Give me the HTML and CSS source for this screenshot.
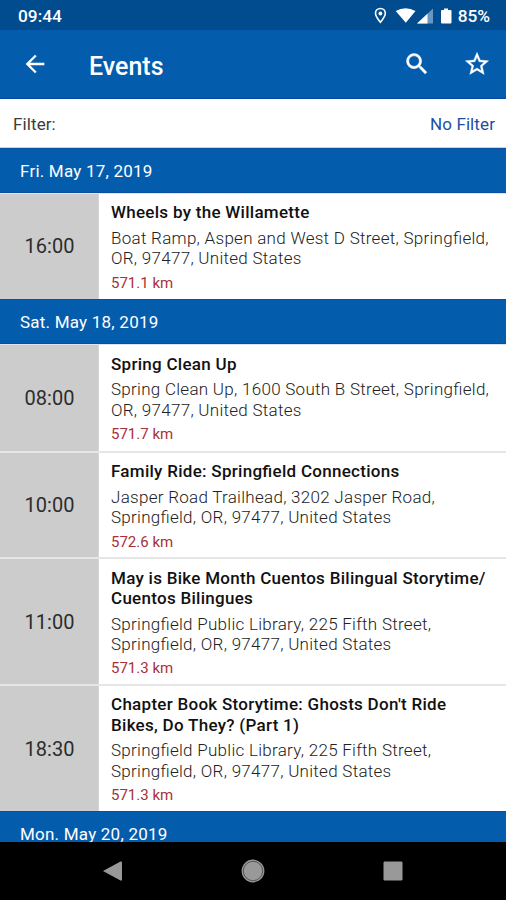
FILE: index.html
```html
<!DOCTYPE html>
<html lang="en">
<head>
<meta charset="utf-8">
<title>Events</title>
<link rel="stylesheet" href="styles.css">
</head>
<body>
<div class="screen">
  <div class="status">
    <span class="clock">09:44</span>
    <svg class="status-icons" viewBox="0 0 82 20" aria-hidden="true">
      <path d="M7.400 2.500c-2.900 0-4.900 2.100-4.900 4.800 0 3.300 4.900 9 4.900 9s4.900-5.700 4.900-9c0-2.700-2-4.800-4.900-4.800z" fill="none" stroke="#fff" stroke-width="1.600"/>
      <circle cx="7.400" cy="7.500" r="1.900" fill="#fff"/>
      <path d="M22.700 5Q32.500-.5 42.500 5L32.800 16.800z" fill="#fff"/>
      <path d="M60 2.500v15H44z" fill="#6997c5"/>
      <path d="M54.500 7.700V17.500H44z" fill="#fff"/>
      <path d="M71 2.500h4V4h2.500a1 1 0 0 1 1 1v11.500a1 1 0 0 1-1 1h-8.500a1 1 0 0 1-1-1V5a1 1 0 0 1 1-1h2z" fill="#fff"/>
    </svg>
    <span class="battery">85%</span>
  </div>
  <header class="appbar">
    <svg class="icon back" viewBox="0 0 24 24"><path fill="#fff" d="M20 11H7.830l5.590-5.590L12 4l-8 8 8 8 1.410-1.410L7.830 13H20v-2z"/></svg>
    <h1>Events</h1>
    <svg class="icon search" viewBox="0 0 24 24"><path fill="#fff" stroke="#fff" stroke-width=".4" d="M15.500 14h-.79l-.28-.27A6.470 6.470 0 0 0 16 9.500 6.500 6.500 0 1 0 9.500 16c1.610 0 3.090-.59 4.230-1.570l.27.28v.79l5 4.990L20.490 19l-4.990-5zm-6 0C7.010 14 5 11.990 5 9.500S7.010 5 9.500 5 14 7.010 14 9.500 11.990 14 9.500 14z"/></svg>
    <svg class="icon star" viewBox="0 0 24 24"><path fill="#fff" stroke="#fff" stroke-width=".3" d="M22 9.240l-7.190-.62L12 2 9.190 8.630 2 9.240l5.460 4.730L5.820 21 12 17.270 18.180 21l-1.630-7.030L22 9.240zM12 15.400l-3.760 2.270 1-4.280-3.320-2.880 4.380-.38L12 6.100l1.710 4.040 4.380.38-3.320 2.880 1 4.280L12 15.400z"/></svg>
  </header>
  <div class="filter"><span>Filter:</span><span class="filter-value">No Filter</span></div>
  <main class="list">
    <h2>Fri. May 17, 2019</h2>
    <article class="event first">
      <div class="time">16:00</div>
      <div class="info"><h3>Wheels by the Willamette</h3><p>Boat Ramp, Aspen and West D Street, Springfield,<br>OR, 97477, United States</p><div class="km">571.1 km</div></div>
    </article>
    <h2>Sat. May 18, 2019</h2>
    <article class="event first">
      <div class="time">08:00</div>
      <div class="info"><h3>Spring Clean Up</h3><p>Spring Clean Up, 1600 South B Street, Springfield,<br>OR, 97477, United States</p><div class="km">571.7 km</div></div>
    </article>
    <article class="event">
      <div class="time">10:00</div>
      <div class="info"><h3>Family Ride: Springfield Connections</h3><p>Jasper Road Trailhead, 3202 Jasper Road,<br>Springfield, OR, 97477, United States</p><div class="km">572.6 km</div></div>
    </article>
    <article class="event">
      <div class="time">11:00</div>
      <div class="info"><h3>May is Bike Month Cuentos Bilingual Storytime/<br>Cuentos Bilingues</h3><p>Springfield Public Library, 225 Fifth Street,<br>Springfield, OR, 97477, United States</p><div class="km">571.3 km</div></div>
    </article>
    <article class="event">
      <div class="time">18:30</div>
      <div class="info"><h3>Chapter Book Storytime: Ghosts Don't Ride<br>Bikes, Do They? (Part 1)</h3><p>Springfield Public Library, 225 Fifth Street,<br>Springfield, OR, 97477, United States</p><div class="km">571.3 km</div></div>
    </article>
    <h2>Mon. May 20, 2019</h2>
  </main>
  <nav class="navbar">
    <svg viewBox="0 0 24 24"><path d="M2 12 19.500 2.500q1.500-.5 1.500 1v17q0 1.500-1.500 1z" fill="#999"/></svg>
    <svg viewBox="0 0 24 24"><circle cx="12" cy="12" r="11.400" fill="#999"/><circle cx="12" cy="12" r="9.700" fill="none" stroke="#444" stroke-width=".8"/></svg>
    <svg viewBox="0 0 24 24"><rect x="2.500" y="2.500" width="19" height="19" rx="1.200" fill="#999"/></svg>
  </nav>
</div>
</body>
</html>
```
FILE: styles.css
```css
* { box-sizing: border-box; }
body { margin: 0; font-family: Roboto, "Liberation Sans", sans-serif; background: #fff; }
h1, h2, h3, p { margin: 0; }
.screen { width: 506px; height: 900px; display: flex; flex-direction: column; overflow: hidden; }
.status { height: 30px; flex: none; background: #004c8e; color: #fff; display: flex; align-items: center; padding: 2px 16px 0 18px; font-size: 17.300px; font-weight: 500; }
.clock { margin-right: auto; }
.status-icons { width: 82px; height: 20px; margin-bottom: 1px; margin-right: 3px; }
.appbar { height: 69px; flex: none; background: #045cad; border-bottom: 1px solid #0348a0; color: #fff; display: flex; align-items: center; padding: 0 15px 0 21px; }
.appbar h1 { margin-left: 40px; margin-right: auto; font-size: 25px; font-weight: 500; line-height: 30px; padding-top: 5px; }
.icon { width: 28px; height: 28px; }
.search { margin-right: 32px; }
.filter { height: 49px; flex: none; display: flex; align-items: center; justify-content: space-between; padding: 1px 11px 0 13px; font-size: 17px; letter-spacing: .1px; color: #3c3c3c; border-bottom: 1px solid #c8d4ec; }
.filter-value { color: #1c4fa3; }
.list { flex: 1; min-height: 0; overflow: hidden; }
h2 { height: 44.500px; background: #045cad; border-top: 1px solid #0a4fa2; border-bottom: 1px solid #0a4fa2; color: #fff; padding-left: 20px; font-size: 17px; font-weight: 400; line-height: 44.400px; letter-spacing: .22px; }
.event { display: flex; border-top: 2px solid #e6e6e6; }
.event.first { border-top: 1px solid #dde4f0; }
.time { width: 99px; flex: none; background: #ccc; border-right: 1px solid #d6d6d6; display: flex; align-items: center; justify-content: center; padding-left: 1px; font-size: 20px; color: #2c2c2c; }
.info { padding: 8.200px 0 6.800px 12px; white-space: nowrap; font-feature-settings: "liga" 1; }
.first .info { padding-top: 8.700px; padding-bottom: 7.600px; }
h3 { font-size: 17px; font-weight: 500; line-height: 20.200px; letter-spacing: .28px; color: #111; }
p { font-size: 17px; font-weight: 300; line-height: 20.200px; letter-spacing: .28px; margin-top: 5.600px; color: #222; }
.km { font-size: 15px; line-height: 18px; margin-top: 5.400px; color: #a83038; }
.navbar { height: 58px; flex: none; background: #000; display: flex; justify-content: center; gap: 116px; align-items: center; }
.navbar svg { width: 24px; height: 24px; }
```
